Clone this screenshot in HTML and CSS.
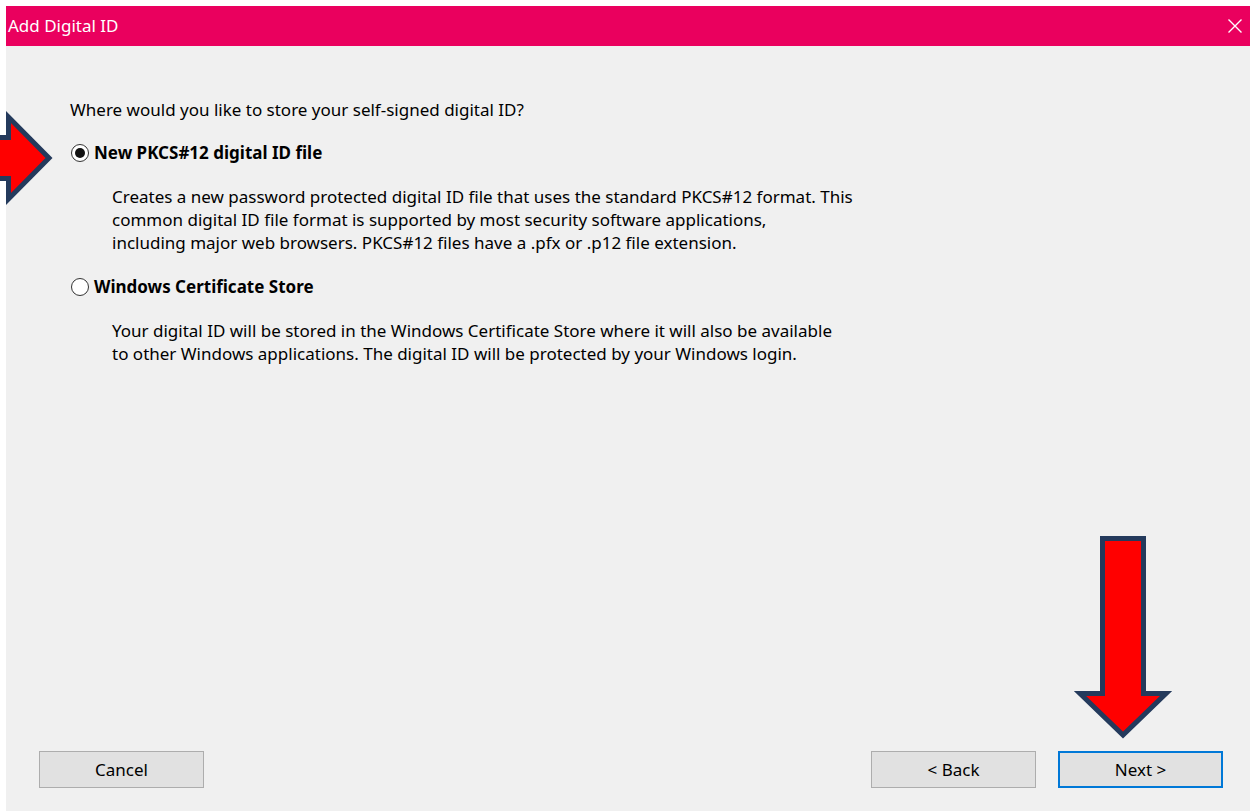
FILE: index.html
```html
<!DOCTYPE html>
<html lang="en">
<head>
<meta charset="utf-8">
<title>Add Digital ID</title>
<link rel="stylesheet" href="styles.css">
</head>
<body>
<div class="window">
  <header class="titlebar">
    <span class="title">Add Digital ID</span>
    <button class="close" aria-label="Close">
      <svg width="16" height="16" viewBox="0 0 16 16"><path d="M1.5 1.5 L14.5 14.5 M14.5 1.5 L1.5 14.5" stroke="#fff" stroke-width="1.4" fill="none"/></svg>
    </button>
  </header>
  <main class="content">
    <p class="question">Where would you like to store your self-signed digital ID?</p>

    <label class="option">
      <span class="radio checked"></span>
      <span class="option-label">New PKCS#12 digital ID file</span>
    </label>
    <p class="desc">Creates a new password protected digital ID file that uses the standard PKCS#12 format. This<br>common digital ID file format is supported by most security software applications,<br>including major web browsers. PKCS#12 files have a .pfx or .p12 file extension.</p>

    <label class="option">
      <span class="radio"></span>
      <span class="option-label">Windows Certificate Store</span>
    </label>
    <p class="desc">Your digital ID will be stored in the Windows Certificate Store where it will also be available<br>to other Windows applications. The digital ID will be protected by your Windows login.</p>

    <footer class="buttons">
      <button class="btn">Cancel</button>
      <div class="nav">
        <button class="btn">&lt; Back</button>
        <button class="btn default">Next &gt;</button>
      </div>
    </footer>
  </main>

  <!-- callout arrows drawn over the dialog -->
  <svg class="arrow arrow-right" width="60" height="105" viewBox="0 0 60 105">
    <polygon points="-10,32.5 8.5,32.5 8.5,12 49,53 8.5,94 8.5,73.5 -10,73.5" fill="#ff0000" stroke="#243a5c" stroke-width="5" stroke-linejoin="miter"/>
  </svg>
  <svg class="arrow arrow-down" width="110" height="215" viewBox="0 0 110 215">
    <polygon points="32.5,8.5 73.5,8.5 73.5,163.5 96,163.5 53,205 10,163.5 32.5,163.5" fill="#ff0000" stroke="#243a5c" stroke-width="5" stroke-linejoin="miter"/>
  </svg>
</div>
</body>
</html>
```
FILE: styles.css
```css
html, body {
  margin: 0;
  padding: 0;
  background: #ffffff;
  height: 100%;
  overflow: hidden;
}

body {
  font-family: "Noto Sans", "Open Sans", sans-serif;
  font-size: 17px;
  color: #000;
}

.window {
  position: relative;
  margin: 6px 4px 0 6px;
  height: 805px;
  display: flex;
  flex-direction: column;
  background: #f0f0f0;
}

.titlebar {
  height: 40px;
  flex: none;
  background: #ea005e;
  display: flex;
  align-items: center;
  justify-content: space-between;
  padding-left: 2px;
}

.title {
  color: #fff;
  font-size: 17px;
  line-height: 1;
  margin-top: -1px;
}

.close {
  border: 0;
  background: transparent;
  padding: 0;
  width: 30px;
  height: 40px;
  display: flex;
  align-items: center;
  justify-content: center;
  margin-right: 0;
}

.content {
  flex: 1;
  display: flex;
  flex-direction: column;
  padding: 52px 27px 23px 33px;
  line-height: 23px;
}

.question {
  margin: 0 0 20px 31px;
}

.option {
  display: flex;
  align-items: center;
  gap: 5px;
  margin-left: 32px;
  height: 23px;
}

.radio {
  width: 16px;
  height: 16px;
  border: 1.5px solid #333;
  border-radius: 50%;
  background: #fff;
  position: relative;
  flex: none;
}

.radio.checked::after {
  content: "";
  position: absolute;
  left: 3px;
  top: 3px;
  width: 10px;
  height: 10px;
  border-radius: 50%;
  background: #111;
}

.option-label {
  font-weight: 700;
}

.desc {
  margin: 21px 0 21px 73px;
}

.buttons {
  margin-top: auto;
  display: flex;
  justify-content: space-between;
}

.nav {
  display: flex;
  gap: 22px;
}

.btn {
  width: 165px;
  height: 37px;
  background: #e1e1e1;
  border: 1px solid #adadad;
  font-family: inherit;
  font-size: 17px;
  color: #000;
  padding: 0;
}

.btn.default {
  border: 2px solid #0078d7;
}

.arrow {
  position: absolute;
  overflow: visible;
}

.arrow-right {
  left: -6px;
  top: 99px;
}

.arrow-down {
  left: 1064px;
  top: 524px;
}
```
